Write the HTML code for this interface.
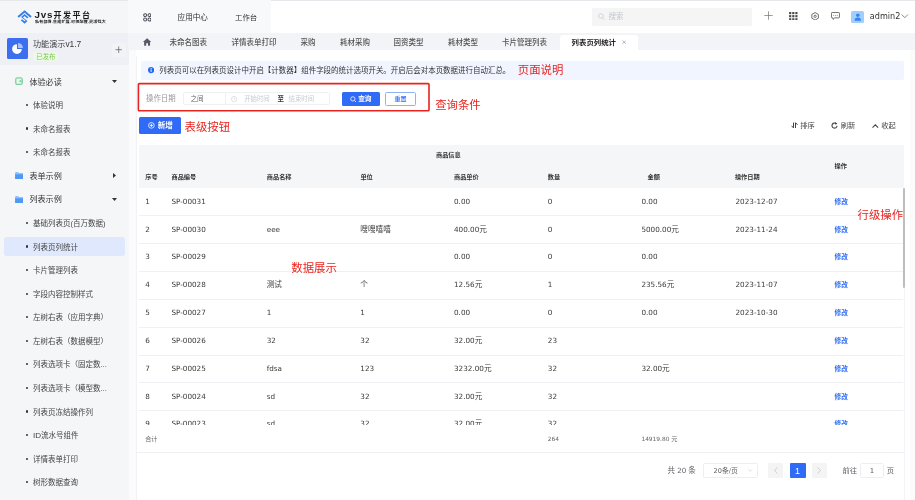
<!DOCTYPE html>
<html lang="zh-CN"><head><meta charset="utf-8"><title>Jvs开发平台</title>
<style>
html,body{margin:0;padding:0}
body{width:915px;height:500px;overflow:hidden;position:relative;background:#fff;font-family:"Liberation Sans","Noto Sans CJK SC",sans-serif;color:#333;-webkit-font-smoothing:antialiased}
.abs{position:absolute;white-space:nowrap}
.mg{font-size:8.1px;line-height:12px;color:#333}
.mi{font-size:7.5px;line-height:12px;color:#444}
.dot{width:2.2px;height:2.2px;border-radius:50%;background:#333}
.tb{font-size:7.5px;line-height:12px;color:#555;font-weight:500;margin-top:0.3px}
.th{font-size:6.2px;line-height:12px;color:#333;font-weight:bold}
.l{font-family:"DejaVu Sans","Liberation Sans",sans-serif;font-size:0.95em}
.td{font-size:7.63px;line-height:12px;color:#3a3a3a}
.op{font-size:6.7px;line-height:12px;color:#2b6cf6;font-weight:bold}
.red{color:#e8241f;font-size:11.4px;line-height:16px}
.tool{font-size:7.3px;line-height:12px;color:#444}
</style></head><body>
<div id="root" style="position:absolute;left:0;top:0;width:915px;height:500px;will-change:transform">
<!-- sidebar -->
<div class="abs" style="left:0;top:0;width:128.7px;height:500px;background:#f5f6f8"></div>
<div class="abs" style="left:0;top:32.6px;width:128.7px;height:32px;background:#eef0f5"></div>
<div class="abs" style="left:111.5px;top:42.6px;width:14.5px;height:14.5px;border-radius:2px;background:rgba(255,255,255,0.22)"></div>
<svg class="abs" style="left:17.2px;top:8.6px" width="15.2" height="15.6" viewBox="0 0 32 30"><path d="M16 1L31 14L28 17L16 6.5L4 17L1 14Z" fill="#3b80e0"/><path d="M16 9L24 16L21.5 18.5L16 13.5L12.5 16.5L22 24L16 29.5L8 22.5L10.5 20L16 24.5L18 22.7L8.5 15.5Z" fill="#2f7df6"/></svg>
<div class="abs" style="left:34.5px;top:9.1px;font-size:8px;line-height:12px;font-weight:bold;color:#1a1a1a;letter-spacing:1.5px"><span style="font-size:9.8px;letter-spacing:0.85px">Jvs</span>开发平台</div>
<div class="abs" style="left:34.5px;top:19.6px;font-size:8px;line-height:10px;font-weight:bold;color:#1a1a1a;transform:scale(0.505,0.46);transform-origin:0 0;letter-spacing:0.3px">私有部署.集成扩展.可视配置.灵活强大</div>
<div class="abs" style="left:6.7px;top:38px;width:21px;height:21px;border-radius:1.5px;background:#3b6ff0"></div>
<svg class="abs" style="left:10.6px;top:41.8px" width="13" height="13" viewBox="0 0 24 24"><path d="M11 4A9 9 0 1 0 20 13H11Z" fill="#fff"/><path d="M13 2A9 9 0 0 1 22 11H13Z" fill="#a9c2fb"/></svg>
<div class="abs" style="left:33px;top:38.4px;font-size:8.1px;line-height:12px;color:#3a3a3a">功能演示<span style="font-size:1.04em">v1.7</span></div>
<div class="abs" style="left:33.4px;top:52.4px;width:24.8px;height:8.2px;border-radius:1px;background:#eef8e8"></div>
<div class="abs" style="left:36.3px;top:50.7px;font-size:6.4px;line-height:12px;color:#7fca5a">已发布</div>
<svg class="abs" style="left:114.8px;top:46.3px" width="7.4" height="7.4" viewBox="0 0 8 8"><path d="M4 0.5V7.5M0.5 4H7.5" stroke="#555" stroke-width="0.75" fill="none"/></svg>
<svg class="abs" style="left:15px;top:77.10px" width="8" height="8.4" viewBox="0 0 16 16"><rect x="1.5" y="1.5" width="13" height="13" rx="3" fill="#e8f7ee" stroke="#7fd0a0" stroke-width="2.6"/><rect x="9" y="6" width="4" height="4" fill="#7fd0a0"/></svg><div class="abs mg" style="left:29.4px;top:76.50px">体验必读</div><svg class="abs" style="left:111.8px;top:80.00px" width="5" height="3" viewBox="0 0 10 6"><path d="M0 0H10L5 6Z" fill="#333"/></svg>
<div class="abs dot" style="left:25.6px;top:103.79px"></div><div class="abs mi" style="left:33px;top:99.99px">体验说明</div>
<div class="abs dot" style="left:25.6px;top:127.38px"></div><div class="abs mi" style="left:33px;top:123.58px">未命名报表</div>
<div class="abs dot" style="left:25.6px;top:150.97px"></div><div class="abs mi" style="left:33px;top:147.17px">未命名报表</div>
<svg class="abs" style="left:15px;top:172.06px" width="8.4" height="7.2" viewBox="0 0 16 14"><path d="M0 1.5Q0 0 1.5 0H6L8 2H14.5Q16 2 16 3.5V12.5Q16 14 14.5 14H1.5Q0 14 0 12.5Z" fill="#93c2fb"/><path d="M0 4.5H16V12.5Q16 14 14.5 14H1.5Q0 14 0 12.5Z" fill="#4f98f7"/></svg><div class="abs mg" style="left:29.4px;top:170.86px">表单示例</div><svg class="abs" style="left:113px;top:173.16px" width="3" height="5" viewBox="0 0 6 10"><path d="M0 0V10L6 5Z" fill="#333"/></svg>
<svg class="abs" style="left:15px;top:195.65px" width="8.4" height="7.2" viewBox="0 0 16 14"><path d="M0 1.5Q0 0 1.5 0H6L8 2H14.5Q16 2 16 3.5V12.5Q16 14 14.5 14H1.5Q0 14 0 12.5Z" fill="#93c2fb"/><path d="M0 4.5H16V12.5Q16 14 14.5 14H1.5Q0 14 0 12.5Z" fill="#4f98f7"/></svg><div class="abs mg" style="left:29.4px;top:194.45px">列表示例</div><svg class="abs" style="left:111.8px;top:197.95px" width="5" height="3" viewBox="0 0 10 6"><path d="M0 0H10L5 6Z" fill="#333"/></svg>
<div class="abs dot" style="left:25.6px;top:221.74px"></div><div class="abs mi" style="left:33px;top:217.94px">基础列表页(百万数据)</div>
<div class="abs" style="left:3.5px;top:236.93px;width:121px;height:19px;background:#dfe8fc;border-radius:2.5px"></div>
<div class="abs dot" style="left:25.6px;top:245.33px"></div><div class="abs mi" style="left:33px;top:241.53px">列表页列统计</div>
<div class="abs dot" style="left:25.6px;top:268.92px"></div><div class="abs mi" style="left:33px;top:265.12px">卡片管理列表</div>
<div class="abs dot" style="left:25.6px;top:292.51px"></div><div class="abs mi" style="left:33px;top:288.71px">字段内容控制样式</div>
<div class="abs dot" style="left:25.6px;top:316.10px"></div><div class="abs mi" style="left:33px;top:312.30px">左树右表（应用字典）</div>
<div class="abs dot" style="left:25.6px;top:339.69px"></div><div class="abs mi" style="left:33px;top:335.89px">左树右表（数据模型）</div>
<div class="abs dot" style="left:25.6px;top:363.28px"></div><div class="abs mi" style="left:33px;top:359.48px">列表选项卡（固定数...</div>
<div class="abs dot" style="left:25.6px;top:386.87px"></div><div class="abs mi" style="left:33px;top:383.07px">列表选项卡（模型数...</div>
<div class="abs dot" style="left:25.6px;top:410.46px"></div><div class="abs mi" style="left:33px;top:406.66px">列表页冻结操作列</div>
<div class="abs dot" style="left:25.6px;top:434.05px"></div><div class="abs mi" style="left:33px;top:430.25px"><span style="font-size:1.08em">ID</span>流水号组件</div>
<div class="abs dot" style="left:25.6px;top:457.64px"></div><div class="abs mi" style="left:33px;top:453.84px">详情表单打印</div>
<div class="abs dot" style="left:25.6px;top:481.23px"></div><div class="abs mi" style="left:33px;top:477.43px">树形数据查询</div>

<!-- top bar -->
<div class="abs" style="left:0;top:0;width:915px;height:0.8px;background:#e6e7ea"></div>
<div class="abs" style="left:128.4px;top:0;width:142.2px;height:33.2px;background:#f8f9fb"></div>
<svg class="abs" style="left:142.6px;top:13.2px" width="8.6" height="8.6" viewBox="0 0 18 18"><g fill="none" stroke="#4a4d57" stroke-width="2.1"><rect x="1.5" y="1.5" width="6" height="6" rx="2.6"/><rect x="10.5" y="1.5" width="6" height="6" rx="2.6"/><rect x="1.5" y="10.5" width="6" height="6" rx="2.6"/><rect x="10.5" y="10.5" width="6" height="6" rx="2.6"/></g></svg>
<div class="abs" style="left:177.6px;top:11.6px;font-size:7.6px;line-height:12px;color:#333">应用中心</div>
<div class="abs" style="left:235px;top:11.6px;font-size:7.4px;line-height:12px;color:#333">工作台</div>
<div class="abs" style="left:592px;top:8px;width:160px;height:17.6px;background:#f5f5f6;border-radius:1px"></div>
<svg class="abs" style="left:598px;top:13.3px" width="7" height="7" viewBox="0 0 14 14"><circle cx="6" cy="6" r="4.6" fill="none" stroke="#bfc2c8" stroke-width="1.3"/><path d="M9.5 9.5L13 13" stroke="#bfc2c8" stroke-width="1.3"/></svg>
<div class="abs" style="left:608.5px;top:10.8px;font-size:7.5px;line-height:12px;color:#c3c6cc">搜索</div>
<svg class="abs" style="left:763.5px;top:11.2px" width="9" height="9" viewBox="0 0 9 9"><path d="M4.5 0.3V8.7M0.3 4.5H8.7" stroke="#666" stroke-width="0.65" fill="none"/></svg>
<svg class="abs" style="left:789.1px;top:11.9px" width="8.6" height="8.4" viewBox="0 0 17 17"><g fill="#4c4c4c"><rect x="0" y="0" width="4.4" height="4.4"/><rect x="6.3" y="0" width="4.4" height="4.4"/><rect x="12.6" y="0" width="4.4" height="4.4"/><rect x="0" y="6.3" width="4.4" height="4.4"/><rect x="6.3" y="6.3" width="4.4" height="4.4"/><rect x="12.6" y="6.3" width="4.4" height="4.4"/><rect x="0" y="12.6" width="4.4" height="4.4"/><rect x="6.3" y="12.6" width="4.4" height="4.4"/><rect x="12.6" y="12.6" width="4.4" height="4.4"/></g></svg>
<svg class="abs" style="left:810.8px;top:11.5px" width="8.2" height="8.6" viewBox="0 0 18 19"><path d="M9 1.2L16.2 5.3V13.7L9 17.8L1.8 13.7V5.3Z" fill="none" stroke="#444" stroke-width="1.7" stroke-linejoin="round"/><circle cx="9" cy="9.5" r="2.6" fill="none" stroke="#444" stroke-width="1.6"/></svg>
<svg class="abs" style="left:831px;top:11.7px" width="8.9" height="8" viewBox="0 0 19 17"><path d="M2.5 1H16.5Q18 1 18 2.5V11Q18 12.5 16.5 12.5H8L4.5 15.8V12.5H2.5Q1 12.5 1 11V2.5Q1 1 2.5 1Z" fill="none" stroke="#444" stroke-width="1.6" stroke-linejoin="round"/><circle cx="5.8" cy="6.8" r="1" fill="#444"/><circle cx="9.5" cy="6.8" r="1" fill="#444"/><circle cx="13.2" cy="6.8" r="1" fill="#444"/></svg>
<div class="abs" style="left:851.3px;top:10.8px;width:12.3px;height:12px;border-radius:1.5px;background:#a3cdfd"></div>
<svg class="abs" style="left:853.6px;top:12.9px" width="7.7" height="8.3" viewBox="0 0 15 17"><circle cx="7.5" cy="4.6" r="3.6" fill="#2f86f6"/><path d="M0.8 16Q0.8 9.2 7.5 9.2Q14.2 9.2 14.2 16Z" fill="#2f86f6"/></svg>
<div class="abs" style="left:869.8px;top:10.4px;font-family:'DejaVu Sans','Liberation Sans',sans-serif;font-size:8.1px;line-height:12px;color:#333">admin2</div>
<svg class="abs" style="left:901px;top:14.4px" width="7.6" height="4.4" viewBox="0 0 15 9"><path d="M1 1L7.5 7.5L14 1" fill="none" stroke="#444" stroke-width="1.3"/></svg>

<!-- tab bar -->
<div class="abs" style="left:128.4px;top:33.2px;width:786.6px;height:16.6px;background:#f3f4f7"></div>
<svg class="abs" style="left:143.2px;top:38.4px" width="8.2" height="8.2" viewBox="0 0 16 16"><path d="M8 0.6L15.6 7.4Q15.8 8 15 8H13.8V14.2Q13.8 15 13 15H9.8V10.4H6.2V15H3Q2.2 15 2.2 14.2V8H1Q0.2 8 0.4 7.4Z" fill="#575b67"/></svg>
<div class="abs tb" style="left:169.6px;top:36.6px">未命名图表</div><div class="abs tb" style="left:231.5px;top:36.6px">详情表单打印</div><div class="abs tb" style="left:300.6px;top:36.6px">采购</div><div class="abs tb" style="left:340px;top:36.6px">耗材采购</div><div class="abs tb" style="left:393.6px;top:36.6px">固资类型</div><div class="abs tb" style="left:448px;top:36.6px">耗材类型</div><div class="abs tb" style="left:502px;top:36.6px">卡片管理列表</div>
<div class="abs" style="left:560.3px;top:34.6px;width:78.2px;height:15.2px;background:#fff;border-radius:3px 3px 0 0"></div>
<div class="abs" style="left:571.6px;top:36.6px;font-size:7.4px;line-height:12px;color:#222;font-weight:bold">列表页列统计</div>
<svg class="abs" style="left:621.6px;top:40.3px" width="4.4" height="4.4" viewBox="0 0 9 9"><path d="M1 1L8 8M8 1L1 8" stroke="#777" stroke-width="1.1"/></svg>

<!-- info -->
<div class="abs" style="left:140.8px;top:60.7px;width:763.1px;height:19px;background:#f0f5ff;border-radius:2px"></div>
<svg class="abs" style="left:147.7px;top:67.4px" width="6.2" height="6.2" viewBox="0 0 12 12"><circle cx="6" cy="6" r="6" fill="#2468f2"/><rect x="5.1" y="5" width="1.8" height="4.4" fill="#fff"/><circle cx="6" cy="3.2" r="1.1" fill="#fff"/></svg>
<div class="abs" style="left:159.3px;top:64.6px;font-size:7.47px;line-height:12px;color:#333">列表页可以在列表页设计中开启【计数器】组件字段的统计选项开关。开启后会对本页数据进行自动汇总。</div>
<div class="abs red" style="left:517.8px;top:61.5px">页面说明</div>

<!-- query -->
<svg class="abs" style="left:136px;top:81px" width="296" height="33" viewBox="0 0 296 33"><rect x="2.4" y="2.6" width="290.6" height="27.2" rx="0.8" fill="none" stroke="#e8241f" stroke-width="1.6"/></svg>
<div class="abs" style="left:146px;top:92.8px;font-size:7.45px;line-height:12px;color:#999">操作日期</div>
<div class="abs" style="left:182.6px;top:92px;width:147.7px;height:13.4px;border:0.6px solid #eef0f4;border-radius:1.5px;box-sizing:border-box"></div>
<div class="abs" style="left:225px;top:92px;width:0.6px;height:13.4px;background:#eef0f4"></div>
<div class="abs" style="left:190.5px;top:92.8px;font-size:6.6px;line-height:12px;color:#666">之间</div>
<svg class="abs" style="left:231.2px;top:95.7px" width="6.2" height="6.2" viewBox="0 0 12 12"><circle cx="6" cy="6" r="5.2" fill="none" stroke="#c6c9cf" stroke-width="1"/><path d="M6 3V6.3H8.6" fill="none" stroke="#c6c9cf" stroke-width="1"/></svg>
<div class="abs" style="left:244.2px;top:92.8px;font-size:6.4px;line-height:12px;color:#c8cbd1">开始时间</div>
<div class="abs" style="left:277.6px;top:92.8px;font-size:6.4px;line-height:12px;color:#333;font-weight:bold">至</div>
<div class="abs" style="left:288.5px;top:92.8px;font-size:6.4px;line-height:12px;color:#c8cbd1">结束时间</div>
<div class="abs" style="left:341.6px;top:91.8px;width:38.4px;height:14.2px;background:#2f6bf6;border-radius:1.5px"></div>
<svg class="abs" style="left:350.2px;top:95.6px" width="6.6" height="6.6" viewBox="0 0 12 12"><circle cx="5.2" cy="5.2" r="3.9" fill="none" stroke="#fff" stroke-width="1.4"/><path d="M8.2 8.2L11.2 11.2" stroke="#fff" stroke-width="1.4"/></svg>
<div class="abs" style="left:358.2px;top:92.9px;font-size:6.7px;line-height:12px;color:#fff;font-weight:bold">查询</div>
<div class="abs" style="left:385.4px;top:91.8px;width:30.5px;height:14.2px;border:0.8px solid #8fb1fa;border-radius:1.5px;box-sizing:border-box;background:#fff"></div>
<div class="abs" style="left:394.4px;top:92.9px;font-size:6.1px;line-height:12px;color:#2f6bf6;font-weight:500">重置</div>
<div class="abs red" style="left:435.2px;top:97px">查询条件</div>

<!-- toolbar -->
<div class="abs" style="left:139.4px;top:117.3px;width:41.7px;height:16.5px;background:#2f6bf6;border-radius:1.5px"></div>
<svg class="abs" style="left:148px;top:122.1px" width="6.8" height="6.8" viewBox="0 0 12 12"><circle cx="6" cy="6" r="5" fill="none" stroke="#fff" stroke-width="1.4"/><path d="M6 3.2V8.8M3.2 6H8.8" stroke="#fff" stroke-width="1.5"/></svg>
<div class="abs" style="left:157.8px;top:119.6px;font-size:7.5px;line-height:12px;color:#fff;font-weight:bold">新增</div>
<div class="abs red" style="left:184.5px;top:118.8px">表级按钮</div>
<svg class="abs" style="left:790.6px;top:122.4px" width="7" height="6.6" viewBox="0 0 14 13"><path d="M5 1V11.5M1 7.5L5 11.8" fill="none" stroke="#444" stroke-width="2"/><path d="M9 12V1.5M13 5.5L9 1.2" fill="none" stroke="#444" stroke-width="2"/></svg>
<div class="abs tool" style="left:800.2px;top:119.8px">排序</div>
<svg class="abs" style="left:831.2px;top:122.2px" width="7" height="7" viewBox="0 0 13 13"><path d="M11.2 6.8A4.7 4.7 0 1 1 9.3 2.9" fill="none" stroke="#444" stroke-width="2"/><path d="M7.4 0L11.8 2.6L8 5.2Z" fill="#444"/></svg>
<div class="abs tool" style="left:840.7px;top:119.8px">刷新</div>
<svg class="abs" style="left:872px;top:123.6px" width="6.6" height="4.2" viewBox="0 0 13 8"><path d="M1 7L6.5 1.5L12 7" fill="none" stroke="#444" stroke-width="2"/></svg>
<div class="abs tool" style="left:881.3px;top:119.8px">收起</div>

<!-- table -->
<div class="abs" style="left:139.4px;top:145px;width:764.6px;height:42.8px;background:#f5f6f7"></div>
<div class="abs th" style="left:436px;top:149.2px">商品信息</div>
<div class="abs th" style="left:145.3px;top:170.9px">序号</div><div class="abs th" style="left:171.5px;top:170.9px">商品编号</div><div class="abs th" style="left:266.8px;top:170.9px">商品名称</div><div class="abs th" style="left:360.4px;top:170.9px">单位</div><div class="abs th" style="left:454px;top:170.9px">商品单价</div><div class="abs th" style="left:547.8px;top:170.9px">数量</div><div class="abs th" style="left:647.5px;top:170.9px">金额</div><div class="abs th" style="left:734.9px;top:170.9px">操作日期</div>
<div class="abs th" style="left:834.6px;top:160px">操作</div>
<div class="abs" style="left:139.4px;top:187.8px;width:764.6px;height:237.4px;overflow:hidden">
<div class="abs td" style="left:5.8px;top:7.90px"><span class="l">1</span></div>
<div class="abs td" style="left:32.0px;top:7.90px"><span class="l">SP-00031</span></div>
<div class="abs td" style="left:314.6px;top:7.90px"><span class="l">0.00</span></div>
<div class="abs td" style="left:408.4px;top:7.90px"><span class="l">0</span></div>
<div class="abs td" style="left:502.0px;top:7.90px"><span class="l">0.00</span></div>
<div class="abs td" style="left:596.1px;top:7.90px"><span class="l">2023-12-07</span></div>
<div class="abs op" style="left:695.1px;top:7.90px">修改</div>
<div class="abs" style="left:0;top:27.52px;width:764px;height:0.6px;background:#eef0f4"></div>
<div class="abs td" style="left:5.8px;top:35.75px"><span class="l">2</span></div>
<div class="abs td" style="left:32.0px;top:35.75px"><span class="l">SP-00030</span></div>
<div class="abs td" style="left:127.3px;top:35.75px"><span class="l">eee</span></div>
<div class="abs td" style="left:220.9px;top:35.75px">嗖嗖嘻嘻</div>
<div class="abs td" style="left:314.6px;top:35.75px"><span class="l">400.00</span>元</div>
<div class="abs td" style="left:408.4px;top:35.75px"><span class="l">0</span></div>
<div class="abs td" style="left:502.0px;top:35.75px"><span class="l">5000.00</span>元</div>
<div class="abs td" style="left:596.1px;top:35.75px"><span class="l">2023-11-24</span></div>
<div class="abs op" style="left:695.1px;top:35.75px">修改</div>
<div class="abs" style="left:0;top:55.37px;width:764px;height:0.6px;background:#eef0f4"></div>
<div class="abs td" style="left:5.8px;top:63.60px"><span class="l">3</span></div>
<div class="abs td" style="left:32.0px;top:63.60px"><span class="l">SP-00029</span></div>
<div class="abs td" style="left:314.6px;top:63.60px"><span class="l">0.00</span></div>
<div class="abs td" style="left:408.4px;top:63.60px"><span class="l">0</span></div>
<div class="abs td" style="left:502.0px;top:63.60px"><span class="l">0.00</span></div>
<div class="abs op" style="left:695.1px;top:63.60px">修改</div>
<div class="abs" style="left:0;top:83.22px;width:764px;height:0.6px;background:#eef0f4"></div>
<div class="abs td" style="left:5.8px;top:91.45px"><span class="l">4</span></div>
<div class="abs td" style="left:32.0px;top:91.45px"><span class="l">SP-00028</span></div>
<div class="abs td" style="left:127.3px;top:91.45px">测试</div>
<div class="abs td" style="left:220.9px;top:91.45px">个</div>
<div class="abs td" style="left:314.6px;top:91.45px"><span class="l">12.56</span>元</div>
<div class="abs td" style="left:408.4px;top:91.45px"><span class="l">1</span></div>
<div class="abs td" style="left:502.0px;top:91.45px"><span class="l">235.56</span>元</div>
<div class="abs td" style="left:596.1px;top:91.45px"><span class="l">2023-11-07</span></div>
<div class="abs op" style="left:695.1px;top:91.45px">修改</div>
<div class="abs" style="left:0;top:111.07px;width:764px;height:0.6px;background:#eef0f4"></div>
<div class="abs td" style="left:5.8px;top:119.30px"><span class="l">5</span></div>
<div class="abs td" style="left:32.0px;top:119.30px"><span class="l">SP-00027</span></div>
<div class="abs td" style="left:127.3px;top:119.30px"><span class="l">1</span></div>
<div class="abs td" style="left:220.9px;top:119.30px"><span class="l">1</span></div>
<div class="abs td" style="left:314.6px;top:119.30px"><span class="l">0.00</span></div>
<div class="abs td" style="left:408.4px;top:119.30px"><span class="l">0</span></div>
<div class="abs td" style="left:502.0px;top:119.30px"><span class="l">0.00</span></div>
<div class="abs td" style="left:596.1px;top:119.30px"><span class="l">2023-10-30</span></div>
<div class="abs op" style="left:695.1px;top:119.30px">修改</div>
<div class="abs" style="left:0;top:138.93px;width:764px;height:0.6px;background:#eef0f4"></div>
<div class="abs td" style="left:5.8px;top:147.15px"><span class="l">6</span></div>
<div class="abs td" style="left:32.0px;top:147.15px"><span class="l">SP-00026</span></div>
<div class="abs td" style="left:127.3px;top:147.15px"><span class="l">32</span></div>
<div class="abs td" style="left:220.9px;top:147.15px"><span class="l">32</span></div>
<div class="abs td" style="left:314.6px;top:147.15px"><span class="l">32.00</span>元</div>
<div class="abs td" style="left:408.4px;top:147.15px"><span class="l">23</span></div>
<div class="abs op" style="left:695.1px;top:147.15px">修改</div>
<div class="abs" style="left:0;top:166.77px;width:764px;height:0.6px;background:#eef0f4"></div>
<div class="abs td" style="left:5.8px;top:175.00px"><span class="l">7</span></div>
<div class="abs td" style="left:32.0px;top:175.00px"><span class="l">SP-00025</span></div>
<div class="abs td" style="left:127.3px;top:175.00px"><span class="l">fdsa</span></div>
<div class="abs td" style="left:220.9px;top:175.00px"><span class="l">123</span></div>
<div class="abs td" style="left:314.6px;top:175.00px"><span class="l">3232.00</span>元</div>
<div class="abs td" style="left:408.4px;top:175.00px"><span class="l">32</span></div>
<div class="abs td" style="left:502.0px;top:175.00px"><span class="l">32.00</span>元</div>
<div class="abs op" style="left:695.1px;top:175.00px">修改</div>
<div class="abs" style="left:0;top:194.62px;width:764px;height:0.6px;background:#eef0f4"></div>
<div class="abs td" style="left:5.8px;top:202.85px"><span class="l">8</span></div>
<div class="abs td" style="left:32.0px;top:202.85px"><span class="l">SP-00024</span></div>
<div class="abs td" style="left:127.3px;top:202.85px"><span class="l">sd</span></div>
<div class="abs td" style="left:220.9px;top:202.85px"><span class="l">32</span></div>
<div class="abs td" style="left:314.6px;top:202.85px"><span class="l">32.00</span>元</div>
<div class="abs td" style="left:408.4px;top:202.85px"><span class="l">32</span></div>
<div class="abs op" style="left:695.1px;top:202.85px">修改</div>
<div class="abs" style="left:0;top:222.47px;width:764px;height:0.6px;background:#eef0f4"></div>
<div class="abs td" style="left:5.8px;top:230.70px"><span class="l">9</span></div>
<div class="abs td" style="left:32.0px;top:230.70px"><span class="l">SP-00023</span></div>
<div class="abs td" style="left:127.3px;top:230.70px"><span class="l">sd</span></div>
<div class="abs td" style="left:220.9px;top:230.70px"><span class="l">32</span></div>
<div class="abs td" style="left:314.6px;top:230.70px"><span class="l">32.00</span>元</div>
<div class="abs td" style="left:408.4px;top:230.70px"><span class="l">32</span></div>
<div class="abs op" style="left:695.1px;top:230.70px">修改</div>
<div class="abs" style="left:0;top:250.32px;width:764px;height:0.6px;background:#eef0f4"></div>
</div>
<div class="abs" style="left:902.8px;top:187.8px;width:2.2px;height:100.4px;background:#bdbdbd;border-radius:1px"></div>
<div class="abs" style="left:145.2px;top:432.7px;font-size:6.2px;line-height:12px;color:#666">合计</div>
<div class="abs" style="left:547.8px;top:432.7px;font-size:6.2px;line-height:12px;color:#666"><span class="l">264</span></div>
<div class="abs" style="left:641.4px;top:432.7px;font-size:6.2px;line-height:12px;color:#666"><span class="l">14919.80</span> 元</div>
<div class="abs" style="left:136px;top:452.2px;width:768px;height:0.6px;background:#eef0f4"></div>
<div class="abs" style="left:128.7px;top:49.8px;width:7.1px;height:451px;background:#fbfbfc"></div><div class="abs" style="left:135.6px;top:56px;width:0.6px;height:444px;background:#f1f2f5"></div><div class="abs" style="left:909.6px;top:49.8px;width:6px;height:451px;background:#fbfbfc"></div>
<div class="abs" style="left:903.6px;top:288px;width:0.6px;height:212px;background:#f3f4f7"></div>
<div class="abs red" style="left:291.3px;top:260.3px">数据展示</div>
<div class="abs red" style="left:857.5px;top:207px">行级操作</div>

<!-- pagination -->
<div class="abs" style="left:667.6px;top:464.9px;font-size:7.5px;line-height:12px;color:#606266">共 <span class="l">20</span> 条</div>
<div class="abs" style="left:703.2px;top:463px;width:54.6px;height:15.3px;border:0.6px solid #eceef3;border-radius:1.5px;box-sizing:border-box"></div>
<div class="abs" style="left:713.6px;top:464.9px;font-size:6.9px;line-height:12px;color:#606266"><span class="l">20</span>条<span class="l">/</span>页</div>
<svg class="abs" style="left:748px;top:469.4px" width="4.6" height="2.8" viewBox="0 0 9 5.5"><path d="M0.8 0.8L4.5 4.5L8.2 0.8" fill="none" stroke="#c0c4cc" stroke-width="1.1"/></svg>
<div class="abs" style="left:768.3px;top:463.4px;width:14.7px;height:14.6px;background:#f4f4f5;border-radius:1px"></div>
<svg class="abs" style="left:773.6px;top:467.2px" width="4" height="7" viewBox="0 0 8 14"><path d="M6.8 1L1.2 7L6.8 13" fill="none" stroke="#c0c4cc" stroke-width="1.5"/></svg>
<div class="abs" style="left:789.5px;top:463.4px;width:16.1px;height:14.6px;background:#2f6bf6;border-radius:1px"></div>
<div class="abs" style="left:789.5px;top:464.7px;width:16.1px;text-align:center;font-size:9px;line-height:12px;color:#fff">1</div>
<div class="abs" style="left:811.6px;top:463.4px;width:15.1px;height:14.6px;background:#f4f4f5;border-radius:1px"></div>
<svg class="abs" style="left:817.3px;top:467.2px" width="4" height="7" viewBox="0 0 8 14"><path d="M1.2 1L6.8 7L1.2 13" fill="none" stroke="#c0c4cc" stroke-width="1.5"/></svg>
<div class="abs" style="left:842.4px;top:464.9px;font-size:7.3px;line-height:12px;color:#606266">前往</div>
<div class="abs" style="left:859.8px;top:463px;width:24.2px;height:15.3px;border:0.6px solid #eceef3;border-radius:1.5px;box-sizing:border-box"></div>
<div class="abs" style="left:859.8px;top:464.9px;width:24.4px;text-align:center;font-size:7.3px;line-height:12px;color:#606266"><span class="l">1</span></div>
<div class="abs" style="left:886.8px;top:464.9px;font-size:7.3px;line-height:12px;color:#606266">页</div>
</div>
</body></html>
